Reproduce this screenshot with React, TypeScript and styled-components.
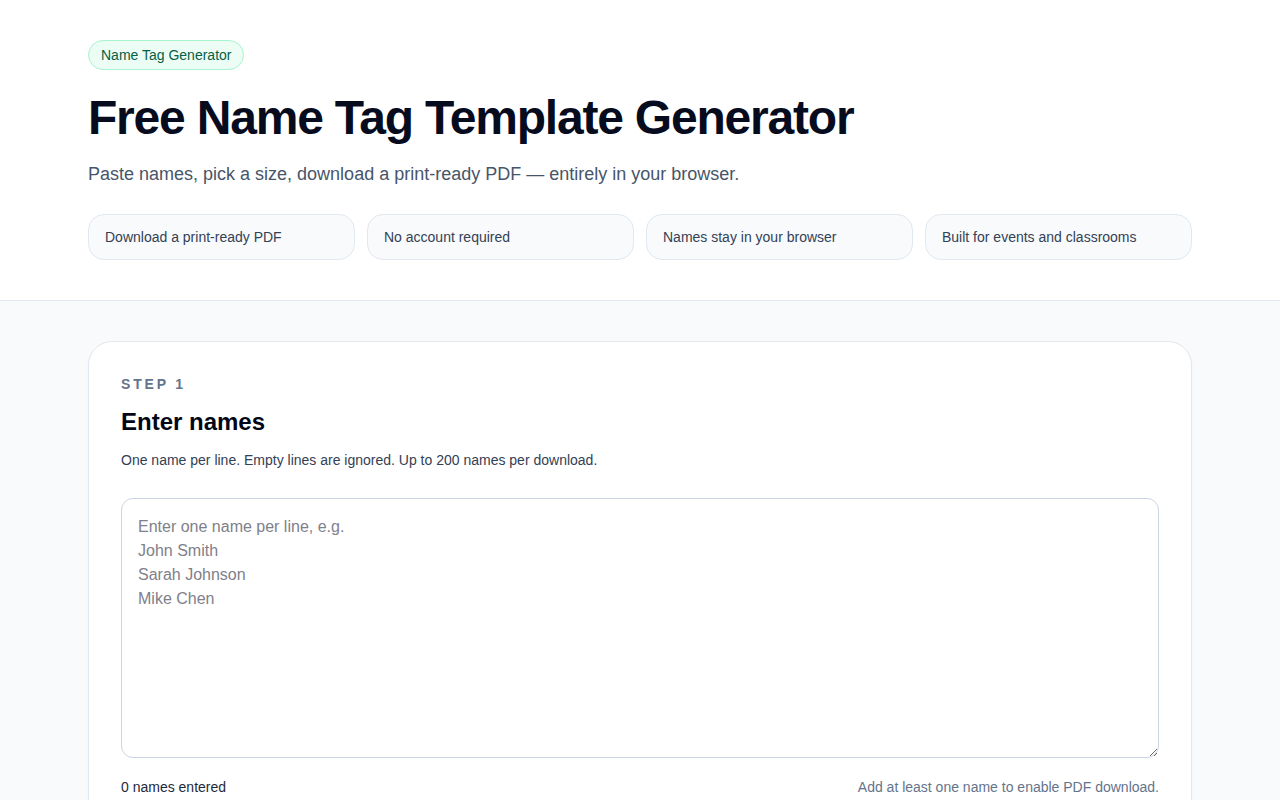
import styled, { createGlobalStyle } from "styled-components";

const GlobalStyle = createGlobalStyle`
  * { box-sizing: border-box; }
  body {
    margin: 0;
    font-family: "Liberation Sans", Arial, sans-serif;
    color: #0f172a;
    background: #f8fafc;
  }
`;

const Hero = styled.header`
  background: #ffffff;
  border-bottom: 1px solid #e2e8f0;
  padding: 40px 0 40px;
`;

const Container = styled.div`
  width: 1104px;
  margin: 0 auto;
`;

const Badge = styled.span`
  display: inline-flex;
  align-items: center;
  height: 30px;
  padding: 0 12px;
  border-radius: 999px;
  background: #ecfdf5;
  border: 1px solid #a7f3d0;
  color: #065f46;
  font-size: 14px;
`;

const Title = styled.h1`
  margin: 20px 0 0;
  font-size: 48px;
  line-height: 56px;
  font-weight: 700;
  letter-spacing: -0.025em;
  color: #070b1e;
`;

const Subtitle = styled.p`
  margin: 14px 0 0;
  font-size: 18px;
  line-height: 28px;
  color: #475569;
`;

const Features = styled.ul`
  list-style: none;
  margin: 26px 0 0;
  padding: 0;
  display: grid;
  grid-template-columns: repeat(4, 1fr);
  gap: 12px;
`;

const Feature = styled.li`
  height: 46px;
  display: flex;
  align-items: center;
  padding: 0 16px;
  border: 1px solid #e2e8f0;
  border-radius: 16px;
  background: #f8fafc;
  color: #334155;
  font-size: 14px;
`;

const Main = styled.main`
  padding: 40px 0;
`;

const Card = styled.section`
  background: #ffffff;
  border: 1px solid #e2e8f0;
  border-radius: 24px;
  padding: 34px 32px 32px;
  box-shadow: 0 1px 2px rgba(15, 23, 42, 0.04);
`;

const Step = styled.div`
  font-size: 14px;
  font-weight: 700;
  letter-spacing: 0.2em;
  color: #64748b;
  line-height: 16px;
`;

const CardTitle = styled.h2`
  margin: 14px 0 0;
  font-size: 24px;
  line-height: 32px;
  font-weight: 700;
  color: #020617;
`;

const Hint = styled.p`
  margin: 12px 0 0;
  font-size: 14px;
  line-height: 20px;
  color: #334155;
`;

const NameInput = styled.textarea`
  display: block;
  width: 100%;
  height: 260px;
  margin-top: 28px;
  padding: 16px;
  border: 1px solid #cbd5e1;
  border-radius: 12px;
  font-family: inherit;
  font-size: 16px;
  line-height: 24px;
  color: #0f172a;
  resize: vertical;
  outline: none;
  &::placeholder {
    color: #80808a;
  }
`;

const FooterRow = styled.div`
  display: flex;
  justify-content: space-between;
  margin-top: 19px;
  font-size: 14px;
  line-height: 20px;
`;

const Count = styled.span`
  color: #1e293b;
`;

const Note = styled.span`
  color: #64748b;
`;

const features = [
  "Download a print-ready PDF",
  "No account required",
  "Names stay in your browser",
  "Built for events and classrooms",
];

export default function App() {
  return (
    <>
      <GlobalStyle />
      <Hero>
        <Container>
          <Badge>Name Tag Generator</Badge>
          <Title>Free Name Tag Template Generator</Title>
          <Subtitle>
            Paste names, pick a size, download a print-ready PDF — entirely in
            your browser.
          </Subtitle>
          <Features>
            {features.map((f) => (
              <Feature key={f}>{f}</Feature>
            ))}
          </Features>
        </Container>
      </Hero>
      <Main>
        <Container>
          <Card>
            <Step>STEP 1</Step>
            <CardTitle>Enter names</CardTitle>
            <Hint>
              One name per line. Empty lines are ignored. Up to 200 names per
              download.
            </Hint>
            <NameInput
              placeholder={
                "Enter one name per line, e.g.\nJohn Smith\nSarah Johnson\nMike Chen"
              }
            />
            <FooterRow>
              <Count>0 names entered</Count>
              <Note>Add at least one name to enable PDF download.</Note>
            </FooterRow>
          </Card>
        </Container>
      </Main>
    </>
  );
}
